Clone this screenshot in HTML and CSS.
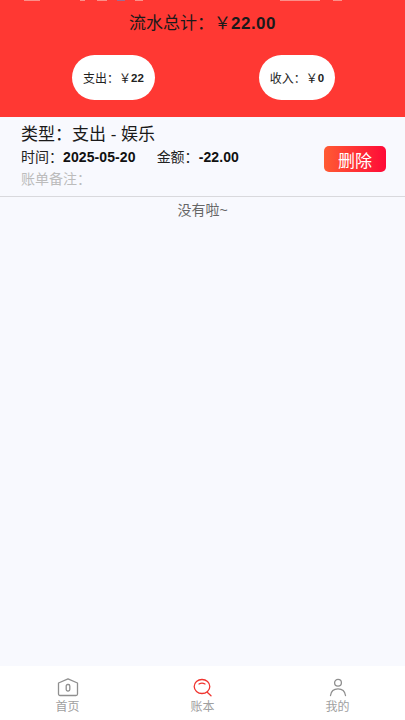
FILE: index.html
```html
<!DOCTYPE html>
<html lang="zh-CN">
<head>
    <meta charset="UTF-8">
    <meta name="viewport" content="width=device-width, initial-scale=1.0">
    <title>账本</title>
    <link rel="stylesheet" href="styles.css">
</head>
<body>
    <div class="page">
        <div class="header">
            <div class="status-bar">
                <i class="mark time"></i>
                <i class="mark app-first"></i>
                <i class="mark app-second"></i>
                <i class="mark blue"></i>
                <i class="mark app-last"></i>
                <i class="mark signal"></i>
                <i class="mark battery"></i>
            </div>
            <div class="total">流水总计：<span class="yen">￥</span><b>22.00</b></div>
            <div class="pills">
                <div class="pill pill-out">支出：<span class="yen">￥</span><b>22</b></div>
                <div class="pill pill-in">收入：<span class="yen">￥</span><b>0</b></div>
            </div>
        </div>

        <div class="bill">
            <div class="bill-info">
                <div class="bill-type">类型：支出 - 娱乐</div>
                <div class="bill-meta">
                    <span>时间：<b>2025-05-20</b></span>
                    <span>金额：<b>-22.00</b></span>
                </div>
                <div class="bill-note">账单备注：</div>
            </div>
            <button class="delete-btn">删除</button>
        </div>

        <div class="no-more">没有啦~</div>

        <div class="tabbar">
            <div class="tab">
                <svg width="24" height="20" viewBox="0 0 24 20" fill="none" stroke="#8f8f8f" stroke-width="1.3">
                    <path d="M2.500 5 12 .8 21.500 5V16a1.500 1.500 0 0 1-1.500 1.500H4A1.500 1.500 0 0 1 2.500 16Z" stroke-linejoin="round"/>
                    <rect x="10.200" y="6.500" width="3.600" height="6.500" rx="1.500"/>
                </svg>
                <span>首页</span>
            </div>
            <div class="tab">
                <svg width="24" height="20" viewBox="0 0 24 20" fill="none" stroke="#f0342f" stroke-width="1.300" stroke-linecap="round">
                    <ellipse cx="11" cy="8.500" rx="7.800" ry="7"/>
                    <path d="M8 6c2-1.200 4-1.200 6 0"/>
                    <path d="m16.500 14.500 3.500 3.200"/>
                </svg>
                <span>账本</span>
            </div>
            <div class="tab">
                <svg width="24" height="20" viewBox="0 0 24 20" fill="none" stroke="#8f8f8f" stroke-width="1.300">
                    <circle cx="12" cy="4.800" r="3.400"/>
                    <path d="M4.500 17.500c.6-4.400 3.500-6.600 7.500-6.600s6.900 2.200 7.500 6.600" stroke-linecap="round"/>
                </svg>
                <span>我的</span>
            </div>
        </div>
    </div>
</body>
</html>
```

FILE: styles.css
```css
* {
    margin: 0;
    padding: 0;
    box-sizing: border-box;
    font-family: "Liberation Sans", "Noto Sans CJK SC", sans-serif;
}

html, body {
    height: 100%;
}

.page {
    height: 720px;
    display: flex;
    flex-direction: column;
    background-color: #f8f9fe;
    overflow: hidden;
}

.header {
    height: 117px;
    background-color: #ff3833;
    flex-shrink: 0;
}

.status-bar {
    height: 1px;
    display: flex;
    padding-left: 24px;
}

.mark {
    height: 1px;
    background-color: #fb8f89;
}

.time {
    width: 16px;
}

.app-first {
    width: 5px;
    margin-left: 40px;
}

.app-second {
    width: 10px;
    margin-left: 12px;
}

.blue {
    width: 8px;
    margin-left: 10px;
    background-color: #a06a90;
}

.app-last {
    width: 8px;
    margin-left: 10px;
}

.signal {
    width: 40px;
    margin-left: 137px;
}

.battery {
    width: 9px;
    margin-left: 13px;
}

.total {
    margin-top: 13px;
    height: 20px;
    line-height: 20px;
    text-align: center;
    font-size: 17px;
    color: #1a1a1a;
}

.total b {
    font-size: 17px;
    letter-spacing: 0.5px;
}

.yen {
    font-weight: normal;
}

.pills {
    display: flex;
    margin-top: 21px;
    padding: 0 70px 0 72px;
    justify-content: space-between;
}

.pill {
    height: 45px;
    border-radius: 23px;
    background-color: white;
    display: flex;
    align-items: center;
    justify-content: center;
    font-size: 12px;
    color: #222;
}

.pill b {
    font-size: 11.500px;
}

.pill-out {
    width: 83px;
}

.pill-in {
    width: 76px;
}

.bill {
    height: 80px;
    border-bottom: 1px solid #d9d9dd;
    padding: 7px 19px 0 21px;
    display: flex;
    justify-content: space-between;
    flex-shrink: 0;
}

.bill-type {
    font-size: 17px;
    line-height: 21px;
    color: #1a1a1a;
}

.bill-meta {
    display: flex;
    gap: 21px;
    margin-top: 3px;
    font-size: 14px;
    line-height: 18px;
    color: #222;
}

.bill-meta b {
    color: #111;
    font-size: 14px;
    letter-spacing: 0.100px;
}

.bill-note {
    margin-top: 4px;
    font-size: 14px;
    line-height: 18px;
    color: #bcbcbc;
}

.delete-btn {
    width: 62px;
    height: 26px;
    margin-top: 22px;
    border: none;
    border-radius: 5px;
    background: linear-gradient(90deg, #ff5b33, #ff0a37);
    color: white;
    font-size: 17px;
}

.no-more {
    margin-top: 4px;
    text-align: center;
    font-size: 14px;
    line-height: 18px;
    color: #666;
}

.tabbar {
    margin-top: auto;
    height: 54px;
    background-color: white;
    display: flex;
    flex-shrink: 0;
}

.tab {
    flex: 1;
    display: flex;
    flex-direction: column;
    align-items: center;
    padding-top: 12px;
    font-size: 12px;
    line-height: 14px;
    color: #a0a0a0;
}

.tab span {
    margin-top: 2px;
}
```
